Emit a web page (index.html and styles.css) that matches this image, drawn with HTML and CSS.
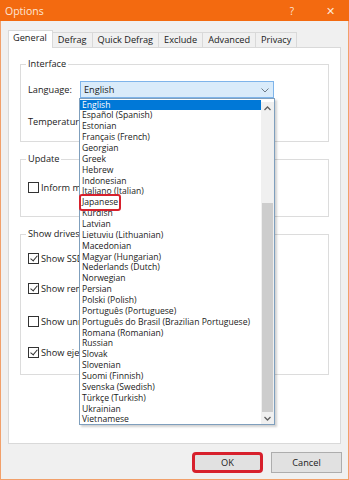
FILE: index.html
```html
<!DOCTYPE html>
<html lang="en">
<head>
  <meta charset="UTF-8">
  <title>Options</title>
  <link rel="stylesheet" href="styles.css">
</head>
<body>

<div class="window">
  <div class="titlebar">
    <span class="title">Options</span>
    <span class="title-btn help">?</span>
    <span class="title-btn close">&#x2715;</span>
  </div>

  <div class="tabs">
    <div class="tab active">General</div>
    <div class="tab">Defrag</div>
    <div class="tab">Quick Defrag</div>
    <div class="tab">Exclude</div>
    <div class="tab">Advanced</div>
    <div class="tab">Privacy</div>
  </div>

  <div class="panel">
    <div class="group group-interface">
      <div class="group-title">Interface</div>
      <div class="row">
        <span class="row-label">Language:</span>
        <div class="combo open">
          <span>English</span>
          <svg class="chev" width="8" height="5" viewBox="0 0 8 5"><path d="M0.5 0.5 L4 4 L7.5 0.5" fill="none" stroke="#6d7a86" stroke-width="1"/></svg>

          <div class="dropdown">
            <div class="options">
              <div class="opt selected">English</div>
              <div class="opt">Español (Spanish)</div>
              <div class="opt">Estonian</div>
              <div class="opt">Français (French)</div>
              <div class="opt">Georgian</div>
              <div class="opt">Greek</div>
              <div class="opt">Hebrew</div>
              <div class="opt">Indonesian</div>
              <div class="opt">Italiano (Italian)</div>
              <div class="opt"><span class="mark">Japanese</span></div>
              <div class="opt">Kurdish</div>
              <div class="opt">Latvian</div>
              <div class="opt">Lietuviu (Lithuanian)</div>
              <div class="opt">Macedonian</div>
              <div class="opt">Magyar (Hungarian)</div>
              <div class="opt">Nederlands (Dutch)</div>
              <div class="opt">Norwegian</div>
              <div class="opt">Persian</div>
              <div class="opt">Polski (Polish)</div>
              <div class="opt">Português (Portuguese)</div>
              <div class="opt">Português do Brasil (Brazilian Portuguese)</div>
              <div class="opt">Romana (Romanian)</div>
              <div class="opt">Russian</div>
              <div class="opt">Slovak</div>
              <div class="opt">Slovenian</div>
              <div class="opt">Suomi (Finnish)</div>
              <div class="opt">Svenska (Swedish)</div>
              <div class="opt">Türkçe (Turkish)</div>
              <div class="opt">Ukrainian</div>
              <div class="opt">Vietnamese</div>
            </div>
            <div class="scrollbar">
              <div class="sb-arrow">
                <svg width="7" height="5" viewBox="0 0 7 5"><path d="M0.5 4 L3.5 1 L6.5 4" fill="none" stroke="#606060" stroke-width="1.3"/></svg>
              </div>
              <div class="sb-track"><div class="sb-thumb"></div></div>
              <div class="sb-arrow">
                <svg width="7" height="5" viewBox="0 0 7 5"><path d="M0.5 1 L3.5 4 L6.5 1" fill="none" stroke="#606060" stroke-width="1.3"/></svg>
              </div>
            </div>
          </div>
        </div>
      </div>
      <div class="row row-temp">
        <span class="row-label">Temperature:</span>
        <div class="combo"><span>Celsius</span></div>
      </div>
    </div>

    <div class="group group-update">
      <div class="group-title">Update</div>
      <label class="check"><span class="box"></span>Inform me about new versions</label>
    </div>

    <div class="group group-drives">
      <div class="group-title">Show drives</div>
      <label class="check"><span class="box on"></span>Show SSD drives</label>
      <label class="check c2"><span class="box on"></span>Show removable drives</label>
      <label class="check c3"><span class="box"></span>Show unmounted drives</label>
      <label class="check c4"><span class="box on"></span>Show ejected drives</label>
    </div>
  </div>

  <div class="buttons">
    <button class="btn ok">OK</button>
    <button class="btn">Cancel</button>
  </div>
</div>

</body>
</html>
```

FILE: styles.css
```css
* { box-sizing: border-box; }
body {
  margin: 0;
  font-family: "Open Sans", "Noto Sans", sans-serif;
  font-size: 9px;
  color: #1a1a1a;
  background: #f0f0f0;
}
.window {
  width: 349px;
  height: 480px;
  display: flex;
  flex-direction: column;
  border: 1px solid #f2a06a;
  border-top: none;
  background: #f0f0f0;
}
.titlebar {
  height: 21px;
  background: #f36a10;
  color: #fde6d6;
  display: flex;
  align-items: center;
  margin: 0 -1px;
  padding: 0 0 0 5px;
}
.title { flex: 1; font-size: 10.5px; }
.title-btn {
  width: 38px;
  text-align: center;
  font-size: 10px;
  color: #fde6d6;
}
.close { width: 38px; font-size: 11px; }

.tabs {
  display: flex;
  align-items: flex-end;
  margin: 9px 0 0 7px;
  height: 17px;
}
.tab {
  height: 15px;
  line-height: 14px;
  padding: 0 5px;
  border: 1px solid #d9d9d9;
  border-bottom: none;
  border-left: none;
  background: #f0f0f0;
  font-size: 9.2px;
}
.tab.active {
  height: 18px;
  background: #fff;
  border-left: 1px solid #d9d9d9;
  margin-bottom: -1px;
  padding: 0 5px 0 4px;
  position: relative;
  z-index: 1;
}
.panel {
  margin: 0 7px 0 7px;
  height: 397px;
  background: #fff;
  border: 1px solid #d9d9d9;
  padding: 16px 11px 0 11px;
}
.group {
  border: 1px solid #dcdcdc;
  padding: 0 0 0 7px;
}
.group-title {
  margin: -7px 0 0 -2px;
  width: fit-content;
  padding: 0 2px;
  line-height: 12px;
  background: #fff;
  font-size: 9.2px;
}
.group-interface { height: 78px; }
.group-update { height: 58px; margin-top: 17px; }
.group-drives { height: 141px; margin-top: 17px; }

.row {
  display: flex;
  align-items: center;
  height: 17px;
  margin-top: 11px;
}
.row-temp { margin-top: 15px; }
.row-label { width: 52px; font-size: 9.2px; white-space: nowrap; }
.combo {
  position: relative;
  width: 194px;
  height: 17px;
  border: 1px solid #adadad;
  background: #e1e1e1;
  display: flex;
  align-items: center;
  padding-left: 3px;
  font-size: 9.2px;
}
.combo.open {
  border-color: #7eb4ea;
  background: #d9ebfa;
  z-index: 5;
}
.chev { position: absolute; right: 4px; top: 6px; }

.dropdown {
  position: absolute;
  top: 16px;
  left: -2px;
  width: 196px;
  height: 327px;
  background: #fff;
  border: 1px solid #7f9fbd;
  box-shadow: 2px 2px 2px rgba(0, 0, 0, 0.18);
  display: flex;
}
.options { flex: 1; padding-top: 0.5px; }
.opt {
  height: 10.86px;
  line-height: 10.86px;
  padding-left: 2px;
  white-space: nowrap;
  font-size: 8.6px;
}
.opt.selected { background: #0078d7; color: #fff; }
.mark {
  position: relative;
  display: inline-block;
}
.mark::after {
  content: "";
  position: absolute;
  left: -3px;
  right: -3px;
  top: -3px;
  bottom: -3px;
  border: 2px solid #d7202c;
  border-radius: 3px;
}
.scrollbar {
  width: 13px;
  margin-top: 3px;
  background: #f0f0f0;
  display: flex;
  flex-direction: column;
}
.sb-arrow {
  height: 12px;
  display: flex;
  align-items: center;
  justify-content: center;
}
.sb-track { flex: 1; display: flex; flex-direction: column; }
.sb-thumb {
  flex: 1;
  margin: 89px 1px 0 1px;
  background: #cdcdcd;
}

.check {
  display: flex;
  align-items: center;
  height: 12px;
  white-space: nowrap;
  font-size: 9.2px;
}
.group-update .check { margin-top: 16px; }
.group-drives .check { margin-top: 12px; }
.group-drives .c2 { margin-top: 18px; }
.group-drives .c3 { margin-top: 21px; }
.group-drives .c4 { margin-top: 19px; }
.box {
  width: 11px;
  height: 11px;
  border: 1px solid #333;
  background: #fff;
  margin-right: 2px;
  position: relative;
}
.box.on::after {
  content: "";
  position: absolute;
  left: 3px;
  top: 0px;
  width: 3px;
  height: 6px;
  border: solid #333;
  border-width: 0 1px 1px 0;
  transform: rotate(40deg);
}

.buttons {
  display: flex;
  justify-content: flex-end;
  gap: 8px;
  margin: 8px 6px 0 0;
}
.btn {
  width: 71px;
  height: 21px;
  border: 1px solid #adadad;
  background: #e1e1e1;
  font-family: inherit;
  font-size: 9.2px;
  color: #1a1a1a;
}
.btn.ok {
  border: 3px solid #d7202c;
  border-radius: 4px;
}
```
